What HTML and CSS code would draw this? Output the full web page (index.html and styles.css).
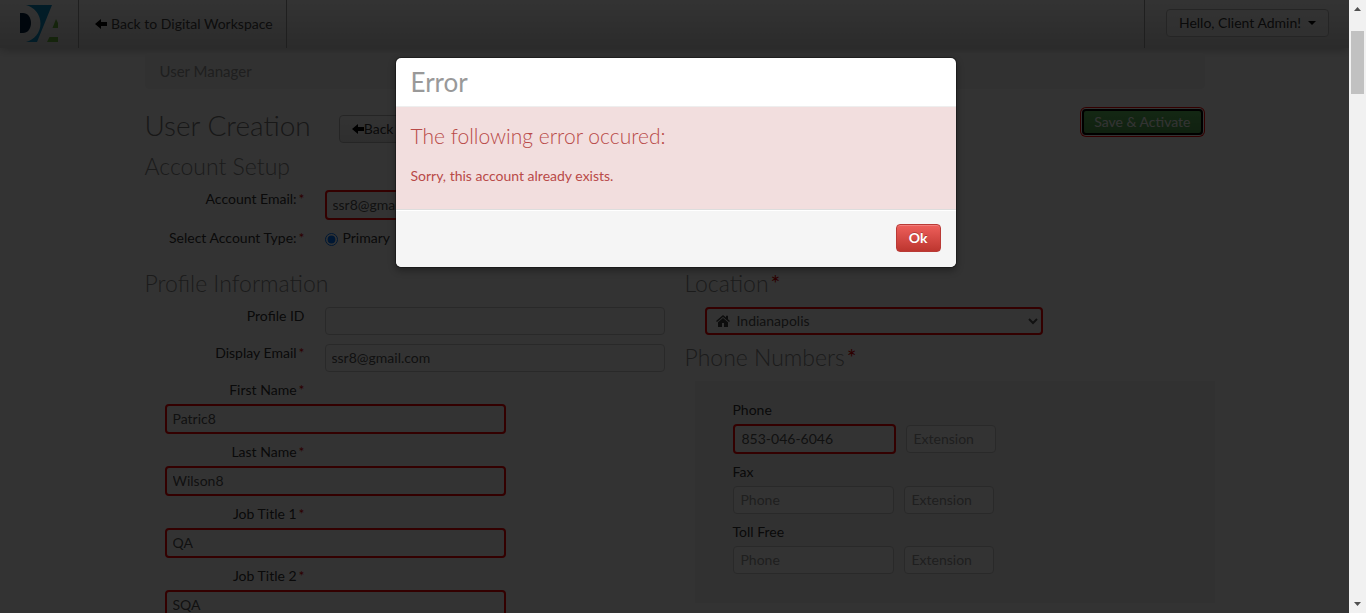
FILE: index.html
```html
<!DOCTYPE html>
<html lang="en">
<head>
<meta charset="utf-8">
<title>User Manager</title>
<link rel="stylesheet" href="styles.css">
</head>
<body>
<div class="viewport">
  <div class="page">
    <header class="navbar">
      <a class="brand" href="#" aria-label="Home">
        <svg width="40" height="40" viewBox="0 0 40 40" aria-hidden="true">
          <path fill="#04223f" d="M1 10h3c4.500 0 8 4 8 10s-3.500 10-8 10H1z"/>
          <path fill="#0a8bc0" d="M7 2h26L18 39H7c8-2 14.500-9 14.500-18.500C21.500 11 15 4 7 2z"/>
          <path fill="#6cb33f" d="M37 16 39 20v5h-5.500zM30.500 34H39v5H28z"/>
        </svg>
      </a>
      <a class="nav-link" href="#">
        <svg class="arrow" width="12" height="10" viewBox="0 0 12 10" aria-hidden="true"><path d="M0 5 6 0v3h6v4H6v3z"/></svg>
        Back to Digital Workspace
      </a>
      <div class="account">
        <button class="btn account-btn" type="button">Hello, Client Admin! <span class="caret"></span></button>
      </div>
    </header>

    <main class="container">
      <nav class="breadcrumb">User Manager</nav>

      <div class="title-row">
        <h1>User Creation</h1>
        <button class="btn back-btn" type="button"><svg class="arrow" width="12" height="10" viewBox="0 0 12 10" aria-hidden="true"><path d="M0 5 6 0v3h6v4H6v3z"/></svg>Back</button>
        <button class="save-btn" type="button">Save &amp; Activate</button>
      </div>

      <div class="columns">
        <section>
          <h2>Account Setup</h2>
          <div class="row">
            <label for="account-email">Account Email:<span class="req">*</span></label>
            <input class="field invalid" id="account-email" type="text" value="ssr8@gmail.com">
          </div>
          <div class="row">
            <span class="row-label">Select Account Type:<span class="req">*</span></span>
            <span class="choice"><input id="primary" type="radio" name="type" checked><label for="primary">Primary</label></span>
          </div>
        </section>
      </div>

      <div class="columns profile">
        <section>
          <h2>Profile Information</h2>
          <div class="row">
            <label for="profile-id">Profile ID</label>
            <input class="field" id="profile-id" type="text">
          </div>
          <div class="row">
            <label for="display-email">Display Email<span class="req">*</span></label>
            <input class="field" id="display-email" type="text" value="ssr8@gmail.com">
          </div>
          <div class="stack">
            <label for="first-name">First Name<span class="req">*</span></label>
            <input class="field invalid" id="first-name" type="text" value="Patric8">
          </div>
          <div class="stack">
            <label for="last-name">Last Name<span class="req">*</span></label>
            <input class="field invalid" id="last-name" type="text" value="Wilson8">
          </div>
          <div class="stack">
            <label for="job-1">Job Title 1<span class="req">*</span></label>
            <input class="field invalid" id="job-1" type="text" value="QA">
          </div>
          <div class="stack">
            <label for="job-2">Job Title 2<span class="req">*</span></label>
            <input class="field invalid" id="job-2" type="text" value="SQA">
          </div>
        </section>

        <section>
          <h2 id="location-title">Location<span class="req">*</span></h2>
          <div class="location">
            <svg class="home" width="14" height="12" viewBox="0 0 14 12" aria-hidden="true"><path d="M7 0 0 6l1 1 6-5 6 5 1-1-2-1.800V.8h-2v1.700zM7 3 2 7.200V12h4V8h2v4h4V7.200z"/></svg>
            <select class="invalid" aria-labelledby="location-title"><option>Indianapolis</option></select>
          </div>
          <h2>Phone Numbers<span class="req">*</span></h2>
          <div class="well">
            <label for="phone">Phone</label>
            <div class="phones">
              <input class="field invalid number" id="phone" type="text" value="853-046-6046">
              <input class="field ext" type="text" placeholder="Extension" aria-label="Phone extension">
            </div>
            <label for="fax">Fax</label>
            <div class="phones">
              <input class="field number" id="fax" type="text" placeholder="Phone">
              <input class="field ext" type="text" placeholder="Extension" aria-label="Fax extension">
            </div>
            <label for="toll">Toll Free</label>
            <div class="phones">
              <input class="field number" id="toll" type="text" placeholder="Phone">
              <input class="field ext" type="text" placeholder="Extension" aria-label="Toll free extension">
            </div>
          </div>
        </section>
      </div>
    </main>

    <div class="backdrop">
      <div class="modal" role="dialog" aria-modal="true" aria-labelledby="modal-title">
        <div class="modal-header"><h3 id="modal-title">Error</h3></div>
        <div class="modal-body">
          <h4>The following error occured:</h4>
          <p>Sorry, this account already exists.</p>
        </div>
        <div class="modal-footer"><button class="ok-btn" type="button">Ok</button></div>
      </div>
    </div>
  </div>

  <div class="scrollbar" aria-hidden="true">
    <svg width="7" height="4" viewBox="0 0 7 4"><path d="M0 4 3.500 0 7 4z"/></svg>
    <div class="thumb"></div>
    <svg class="down" width="7" height="4" viewBox="0 0 7 4"><path d="M0 0 3.500 4 7 0z"/></svg>
  </div>
</div>
</body>
</html>
```
FILE: styles.css
```css
* { box-sizing: border-box; }

body {
  margin: 0;
  font: 14px/18px Lato, "Liberation Sans", sans-serif;
  color: #333;
  background: #fff;
}

h1, h2, h3, h4, p { margin: 0; }

input, select, button { font: inherit; color: inherit; }

.viewport {
  display: grid;
  grid-template-columns: minmax(0, 1fr) 17px;
  height: 100vh;
}

.page { position: relative; overflow: hidden; }

/* Navigation bar */
.navbar {
  display: flex;
  height: 48px;
  background: linear-gradient(#fff, #d6d6d6);
  box-shadow: 0 1px 10px rgba(0, 0, 0, .3);
}

.brand {
  display: flex;
  padding: 3px 19px 0;
  border-right: 1px solid #999;
}

.nav-link {
  display: flex;
  align-items: center;
  gap: 4px;
  padding: 0 13px 0 16px;
  border-right: 1px solid #999;
  color: #444;
  text-decoration: none;
}

.arrow { fill: #000; }

.account {
  margin-left: auto;
  padding: 9px 20px 0 21px;
  border-left: 1px solid #999;
}

.btn {
  display: flex;
  align-items: center;
  height: 28px;
  padding: 0 12px;
  border: 1px solid #bbb;
  border-radius: 4px;
  background: linear-gradient(#fff, #e6e6e6);
}

.account-btn { gap: 7px; background: linear-gradient(#fafafa, #ededed); }

.caret {
  border: 4px solid transparent;
  border-top-color: #000;
  border-bottom: 0;
}

/* Content */
.container { max-width: 1060px; margin: 0 auto; padding-top: 5px; }

.breadcrumb {
  padding: 9px 15px;
  border-radius: 4px;
  background: #f5f5f5;
  color: #999;
  font-size: 15px;
}

.title-row {
  display: flex;
  align-items: flex-start;
  margin: 18px 0 9px;
}

h1 { font-size: 28px; line-height: 36px; font-weight: 300; color: #777; }

.back-btn { margin: 8px 0 0 28px; }

.save-btn {
  height: 26px;
  margin: 2px 2px 0 auto;
  padding: 0 10px;
  border: 2px solid #000;
  border-radius: 4px;
  background: linear-gradient(#62c462, #51a351);
  box-shadow: 0 0 0 1px #fff, 0 0 0 2px #f00;
  color: #fff;
  line-height: 22px;
}

.columns {
  display: grid;
  grid-template-columns: repeat(2, minmax(0, 1fr));
  gap: 20px;
}

.profile { margin-top: 13px; }

h2 {
  margin-bottom: 10px;
  font-size: 23px;
  line-height: 28px;
  font-weight: 300;
  color: #888;
}

.req { margin-left: 2px; color: #e00000; }

h2 .req { font-weight: 400; }

.row { display: flex; gap: 20px; margin-bottom: 9px; }

.row > label, .row-label, .stack > label { width: 160px; text-align: right; }

.row > .field { flex: 1; min-width: 0; }

.choice { display: flex; align-items: center; gap: 5px; }

.choice input { margin: 2px 0 0; }

.stack { display: flex; flex-direction: column; gap: 5px; margin-bottom: 9px; }

.stack > .field { width: calc(100% - 179px); margin-left: 20px; }

.field {
  height: 28px;
  padding: 0 6px 1px;
  border: 1px solid #ccc;
  border-radius: 4px;
  background: #fff;
  color: #555;
}

.field::placeholder { color: #999; }

.field.invalid { height: 30px; border: 2px solid #f00; }

.location { position: relative; margin: 0 0 8px 20px; }

.location select {
  display: block;
  width: 338px;
  max-width: 100%;
  height: 28px;
  padding: 0 0 1px 26px;
  border: 2px solid #f00;
  border-radius: 4px;
  background: #fff;
  color: #555;
}

.home { position: absolute; left: 11px; top: 8px; fill: #444; }

.well {
  margin: 0 -10px 0 10px;
  padding: 20px 38px 20px;
  background: #f5f5f5;
}

.phones { display: flex; align-items: center; gap: 10px; margin: 5px 0 9px; }

.phones .field { padding-left: 7px; }

.number { width: 161px; }

.number.invalid { width: 163px; }

.ext { width: 90px; }

.well label { display: block; }

/* Error dialog */
.backdrop {
  position: absolute;
  inset: 0;
  display: flex;
  justify-content: center;
  align-items: flex-start;
  padding: 57px 0 0 2px;
  background: rgba(0, 0, 0, .8);
}

.modal {
  width: 562px;
  max-width: 100%;
  border: 1px solid rgba(0, 0, 0, .3);
  border-radius: 6px;
  background: #fff;
  background-clip: padding-box;
  box-shadow: 0 3px 7px rgba(0, 0, 0, .3);
}

.modal-header { padding: 9px 15px; border-bottom: 1px solid #eee; }

.modal-header h3 { font-size: 26px; line-height: 30px; font-weight: 400; color: #999; }

.modal-body { padding: 15px; background: #f2dede; color: #b94a48; }

.modal-body h4 { font-size: 21px; line-height: 28px; font-weight: 300; }

.modal-body p { margin: 17px 0 9px; }

.modal-footer {
  display: flex;
  justify-content: flex-end;
  padding: 14px 15px 15px;
  border-top: 1px solid #ddd;
  border-radius: 0 0 6px 6px;
  background: #f5f5f5;
  box-shadow: inset 0 1px 0 #fff;
}

.ok-btn {
  height: 28px;
  padding: 0 12px;
  border: 1px solid #b93a36;
  border-radius: 4px;
  background: linear-gradient(#ee5f5b, #bd362f);
  box-shadow: inset 0 1px 0 rgba(255, 255, 255, .2);
  color: #fff;
  font-weight: 700;
  text-shadow: 0 -1px 0 rgba(0, 0, 0, .25);
}

/* Scroll bar */
.scrollbar {
  display: flex;
  flex-direction: column;
  align-items: center;
  padding: 7px 0;
  background: #f1f1f1;
}

.scrollbar svg { fill: #505050; }

.thumb { width: 13px; height: 63px; margin-top: 20px; background: #c1c1c1; }

.down { margin-top: auto; }
```
